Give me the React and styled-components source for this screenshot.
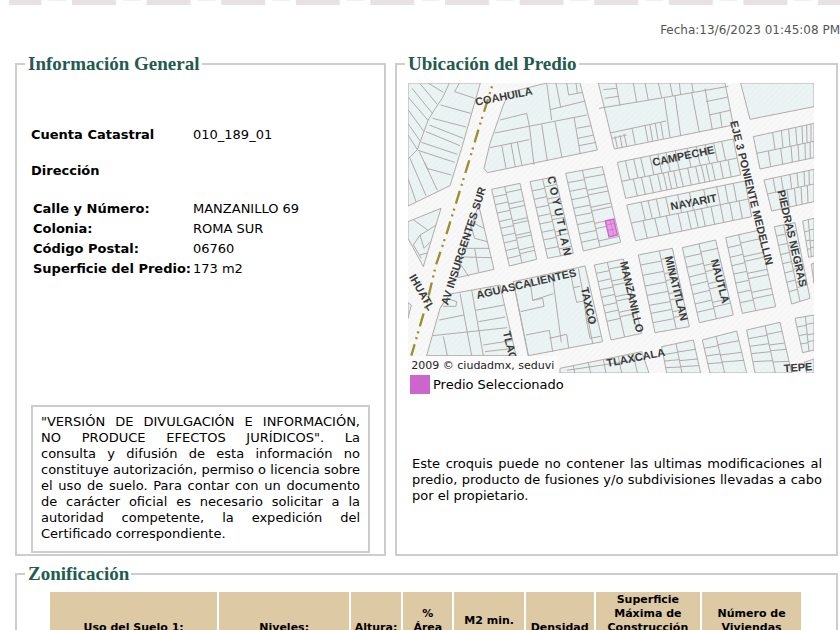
import React from 'react'
import styled, { createGlobalStyle } from 'styled-components'

const GlobalStyle = createGlobalStyle`
    * {
        box-sizing: border-box;
    }
    body {
        margin: 0;
        background-color: white;
        color: black;
        font-family: "DejaVu Sans", Verdana, sans-serif;
        font-size: 13px;
        line-height: 16px;
    }
`

const Page = styled.main`
    display: flex;
    flex-direction: column;
`

const Strip = styled.svg`
    display: block;
    width: 100%;
    height: 6px;
`

const DateLine = styled.div`
    padding: 16px 0;
    text-align: right;
    font-size: 12px;
    color: #555;
`

const Sections = styled.div`
    display: grid;
    grid-template-columns: 371fr 443fr;
    gap: 8px 9px;
    padding: 0 2px 0 15px;
`

const Panel = styled.fieldset`
    display: flex;
    flex-direction: column;
    grid-column: ${props => props.$wide ? '1 / -1' : 'auto'};
    min-width: 0;
    margin: 0;
    padding: 0;
    border: 2px solid #cdcdcd;
`

const Legend = styled.legend`
    margin-left: 8px;
    padding: 0 2px 0 3px;
    font-family: "Liberation Serif", "Times New Roman", serif;
    font-size: 19px;
    font-weight: bold;
    line-height: 20px;
    color: #235b4e;
`

const Info = styled.div`
    display: flex;
    flex-direction: column;
    flex: 1;
    padding: 53px 14px 1px;
`

const Account = styled.dl`
    display: grid;
    grid-template-columns: 162px 1fr;
    margin: 0;
`

const Term = styled.dt`
    font-weight: bold;
    white-space: nowrap;
`

const Value = styled.dd`
    margin: 0;
`

const Heading = styled.h3`
    margin: 20px 0 22px;
    font-size: 13px;
`

const Address = styled.dl`
    display: grid;
    grid-template-columns: 156px 1fr;
    column-gap: 4px;
    row-gap: 4px;
    margin: 0;
    padding-left: 2px;
`

const Notice = styled.p`
    margin: auto 0 0;
    padding: 7px 8px 9px;
    border: 2px solid #cdcdcd;
`

const NoticeLine = styled.span`
    display: block;
    text-align: justify;
    text-align-last: justify;

    &:last-child {
        text-align-last: left;
    }
`

const Location = styled.div`
    display: flex;
    flex-direction: column;
    flex: 1;
    padding: 9px 14px 50px 11px;
`

const Map = styled.svg`
    display: block;
    width: 406px;
    max-width: 100%;
    font-family: "Liberation Sans", Arial, sans-serif;
`

const Key = styled.div`
    display: flex;
    align-items: center;
    gap: 3px;
    padding: 2px;
`

const Swatch = styled.span`
    width: 20px;
    height: 19px;
    background-color: #cc66cc;
`

const Sketch = styled.p`
    margin: 60px 0 0;
    padding-left: 4px;
    text-align: justify;
`

const Zoning = styled.div`
    padding: 6px 33px 0 31px;
`

const Table = styled.table`
    width: 100%;
    table-layout: fixed;
    border-collapse: separate;
    border-spacing: 2px;
`

const Col = styled.col`
    width: ${props => props.$share}%;
`

const HeaderCell = styled.th`
    height: 72px;
    padding: 1px 0;
    background-color: #ddc9a3;
    font-size: 11px;
    line-height: 14px;
    text-align: center;
    vertical-align: middle;
`

const TitleLine = styled.span`
    display: block;
`

const address = [
    { label: 'Calle y Número:', value: 'MANZANILLO 69' },
    { label: 'Colonia:', value: 'ROMA SUR' },
    { label: 'Código Postal:', value: '06760' },
    { label: 'Superficie del Predio:', value: '173 m2' },
]

const notice = [
    '"VERSIÓN DE DIVULGACIÓN E INFORMACIÓN,',
    'NO PRODUCE EFECTOS JURÍDICOS". La',
    'consulta y difusión de esta información no',
    'constituye autorización, permiso o licencia sobre',
    'el uso de suelo. Para contar con un documento',
    'de carácter oficial es necesario solicitar a la',
    'autoridad competente, la expedición del',
    'Certificado correspondiente.',
]

const columns = [
    { share: 22.7, title: ['Uso del Suelo 1:'] },
    { share: 17.6, title: ['Niveles:'] },
    { share: 6.8, title: ['Altura:'] },
    { share: 6.7, title: ['%', 'Área', 'Libre'] },
    { share: 9.4, title: ['M2 min.', 'Vivienda:'] },
    { share: 9.2, title: ['Densidad'] },
    { share: 14.2, title: ['Superficie', 'Máxima de', 'Construcción', '(Sin', 'restricciones):'] },
    { share: 13.4, title: ['Número de', 'Viviendas', 'Permitidas:'] },
]

// city blocks: corners clockwise from top left, c = inner column lines, r = inner row lines (0..1),
// ca / cb = column lines that only cross the upper / lower half
const blocks = [
    { q: [[1060, 185], [1242, 145], [1242, 248], [1080, 282]], r: [0.52], ca: [0.32, 0.46, 0.58, 0.7, 0.8, 0.88, 0.95], cb: [0.2, 0.42, 0.6, 0.72, 0.84, 0.93] },
    { q: [[1092, 315], [1242, 283], [1242, 380], [1115, 408]], r: [0.45], ca: [0.18, 0.34, 0.52, 0.66, 0.8, 0.9], cb: [0.24, 0.42, 0.58, 0.72, 0.86] },
    { q: [[1123, 455], [1185, 443], [1230, 670], [1175, 687]], c: [0.45], r: [0.12, 0.24, 0.36, 0.48, 0.6, 0.72, 0.84] },
    { q: [[1208, 438], [1242, 430], [1242, 543], [1226, 547]], c: [0.5], r: [0.3, 0.55, 0.78] },
    { q: [[652, 262], [1000, 192], [1022, 300], [677, 370]], r: [0.53], ca: [0.07, 0.14, 0.2, 0.28, 0.35, 0.42, 0.5, 0.6, 0.68, 0.76, 0.83, 0.9], cb: [0.1, 0.17, 0.24, 0.31, 0.36, 0.4, 0.45, 0.5, 0.57, 0.64, 0.69, 0.73, 0.78, 0.85, 0.92] },
    { q: [[680, 390], [1035, 318], [1055, 425], [707, 497]], r: [0.5], ca: [0.12, 0.18, 0.25, 0.33, 0.43, 0.53, 0.65, 0.76, 0.83, 0.9], cb: [0.1, 0.2, 0.3, 0.4, 0.48, 0.54, 0.6, 0.68, 0.76, 0.84, 0.92] },
    { q: [[715, 540], [817, 520], [868, 755], [765, 773]], c: [0.62], r: [0.13, 0.26, 0.4, 0.52, 0.65, 0.75, 0.87] },
    { q: [[847, 518], [947, 495], [1000, 720], [898, 743]], c: [0.5], r: [0.13, 0.26, 0.39, 0.5, 0.62, 0.75, 0.86] },
    { q: [[977, 488], [1075, 466], [1127, 695], [1027, 715]], c: [0.4], r: [0.13, 0.26, 0.37, 0.48, 0.6, 0.73, 0.86] },
    { q: [[275, 343], [360, 325], [410, 553], [328, 573]], c: [0.46], r: [0.1, 0.2, 0.31, 0.42, 0.51, 0.61, 0.7, 0.8, 0.9] },
    { q: [[390, 320], [465, 305], [520, 535], [443, 550]], c: [0.5], r: [0.12, 0.23, 0.34, 0.45, 0.55, 0.66, 0.76, 0.88] },
    { q: [[497, 295], [607, 275], [662, 502], [550, 528]], c: [0.45], r: [0.12, 0.23, 0.34, 0.45, 0.55, 0.66, 0.78, 0.89] },
    { q: [[583, 570], [670, 552], [725, 775], [633, 795]], c: [0.45], r: [0.11, 0.22, 0.33, 0.43, 0.54, 0.64, 0.75] },
    { q: [[785, 815], [880, 795], [902, 894], [800, 894]], c: [0.45], r: [0.3, 0.55, 0.8] },
    { q: [[907, 795], [1010, 768], [1040, 894], [930, 894]], c: [0.4], r: [0.25, 0.48, 0.72] },
    { q: [[1040, 765], [1140, 742], [1175, 894], [1065, 894]], c: [0.55], r: [0.2, 0.38, 0.55, 0.74] },
    { q: [[1185, 730], [1242, 720], [1242, 825], [1208, 833]], c: [0.55], r: [0.25, 0.5, 0.75] },
]

// irregular blocks
const outlines = [
    'M24 24H241L222 90L185 220L160 300L150 332L24 393Z',
    'M310 90L328 52L440 24H540L592 225L262 293L252 280L270 205Z',
    'M595 24H975L1000 150L643 222Z',
    'M1022 24L1050 133L1242 95V24Z',
    'M1234 567L1242 565V625Z',
    'M236 390L282 583L172 608L190 520Z',
    'M24 440L123 400L70 575L24 490Z',
    'M150 657L300 630L348 842H80L120 700Z',
    'M340 620L555 573L608 800L385 842Z',
    'M480 880L725 830L747 894H480Z',
    'M1212 862L1242 852V894H1220Z',
    'M24 683L34 690L24 730Z',
]

const lotLines = [
    // west of Insurgentes
    'M148 24L128 68L106 100L84 136L52 224L24 252M84 24L130 52M60 26L112 88M36 40L98 116M26 68L84 136M24 104L72 170M24 146L62 200M24 180L52 224',
    'M178 24L164 50L224 70M122 90L212 115M98 130L198 156M88 150L190 190M78 170L180 212M64 202L172 238M54 226L164 262M80 280L154 300M58 230L112 346M84 284L74 262M30 250L78 362M24 310L48 380',
    // south of Coahuila
    'M300 135L380 115L388 152L402 270M284 174L560 120M440 24L455 135M450 104L556 78M270 218L388 194M305 210L318 280M333 205L346 276M352 202L366 271M425 148L442 258M465 140L486 248M522 126L541 238M530 160L574 152M534 190L582 180M537 212L588 202M468 24L482 96M500 24L506 60L548 52M528 24L532 54',
    'M597 100L790 68L985 34M648 24L660 92M700 24L710 82M735 24L745 76M775 24L785 68M810 24L818 63M838 24L842 59M875 24L880 54M610 44L650 40M614 70L655 64M793 70L810 188M825 62L842 182M875 52L898 172M915 40L937 164M918 80L985 66M928 120L990 106M960 112L966 158M630 174L798 138M645 184L652 218M660 180L666 216M672 176L680 213M696 160L706 208M735 152L744 200M750 150L758 198M766 146L774 194M782 142L790 191M636 190L680 180',
    // around Insurgentes
    'M40 434L84 466L108 450M84 466L60 480L40 510M60 480L72 520L92 500M40 510L64 550M60 540L82 534M212 450L224 490L262 500M196 520L268 520M190 546L276 548M224 520L236 592M212 440L252 460M180 566L206 604',
    'M180 655L215 842M215 644L250 842M118 735L192 720M98 782L322 758M130 784L142 842M226 706L312 690M236 740L316 726M250 810L338 796M240 640L248 664M270 635L278 658M120 700L140 670L170 680L168 694L130 694M255 830L342 820',
    'M340 620L385 842M362 710L432 694L428 670L398 676L390 612M398 676L460 656M456 594L484 802M378 780L448 766L458 830M448 790L500 778L506 818M510 584L520 638L540 634M535 580L578 806M520 638L530 682L552 678M552 678L560 740L590 736M560 740L570 790L602 784',
    'M520 872L524 894M565 863L572 894M610 854L618 894M655 845L665 894M700 836L712 894M500 886L730 852',
]

const streets = [
    { name: 'COAHUILA', x: 228, y: 92, turn: -11 },
    { name: 'AV INSURGENTES SUR', x: 144, y: 692, turn: -72 },
    { name: 'IHUATL', x: 26, y: 606, turn: 60 },
    { name: 'CAMPECHE', x: 760, y: 274, turn: -12 },
    { name: 'NAYARIT', x: 814, y: 406, turn: -11 },
    { name: 'EJE 3 PONIENTE MEDELLIN', x: 990, y: 140, turn: 76 },
    { name: 'PIEDRAS NEGRAS', x: 1132, y: 348, turn: 77 },
    { name: 'C O Y U T L A N', x: 442, y: 306, turn: 78 },
    { name: 'AGUASCALIENTES', x: 232, y: 672, turn: -13 },
    { name: 'TAXCO', x: 542, y: 640, turn: 77 },
    { name: 'MANZANILLO', x: 660, y: 562, turn: 77 },
    { name: 'MINATITLAN', x: 794, y: 546, turn: 76 },
    { name: 'NAUTLA', x: 932, y: 556, turn: 75 },
    { name: 'TLAC', x: 308, y: 772, turn: 76 },
    { name: 'TLAXCALA', x: 622, y: 876, turn: -11 },
    { name: 'TEPE', x: 1152, y: 892, turn: -4 },
]

function at(q, u, v) {
    const mix = i =>
        (q[0][i] * (1 - u) + q[1][i] * u) * (1 - v) + (q[3][i] * (1 - u) + q[2][i] * u) * v
    return `${Math.round(mix(0))} ${Math.round(mix(1))}`
}

function lots({ q, c = [], r = [], ca = [], cb = [] }) {
    const line = (u1, v1, u2, v2) => `M${at(q, u1, v1)}L${at(q, u2, v2)}`
    return [
        ...c.map(u => line(u, 0, u, 1)),
        // neighbouring lots do not line up exactly across the back fence
        ...r.map((v, i) => c.length
            ? line(0, v, c[0], v) + line(c[0], v + (i % 2 ? 0.03 : -0.02), 1, v + (i % 2 ? 0.03 : -0.02))
            : line(0, v, 1, v)),
        ...ca.map(u => line(u, 0, u, r[0])),
        ...cb.map(u => line(u, r[0], u, 1)),
    ].join('')
}

function LotMap() {
    return (
        <Map viewBox="24 24 1218 870" role="img" aria-label="Croquis de ubicación del predio">
            <defs>
                <pattern id="ground" width="18" height="18" patternUnits="userSpaceOnUse">
                    <rect width="18" height="18" fill="#f8f8f8" />
                    <path d="M0 18L18 0" stroke="#f2f2f2" strokeWidth="3" />
                </pattern>
                <pattern id="lot" width="18" height="18" patternUnits="userSpaceOnUse">
                    <rect width="18" height="18" fill="#e6f3f2" />
                    <path d="M0 18L18 0" stroke="#eff3f2" strokeWidth="5" />
                </pattern>
            </defs>
            <rect x="24" y="24" width="1218" height="870" fill="url(#ground)" />
            <g fill="url(#lot)" stroke="#b3aaaa" strokeWidth="3">
                {outlines.map(d => <path key={d} d={d} />)}
                {blocks.map(block => (
                    <path key={block.q.join()} d={`M${block.q.map(p => p.join(' ')).join('L')}Z`} />
                ))}
            </g>
            <g fill="none" stroke="#b3aaaa" strokeWidth="3">
                {lotLines.map(d => <path key={d} d={d} />)}
                {blocks.map(block => <path key={block.q.join()} d={lots(block)} />)}
            </g>
            <path d="M616 438L641 432L652 480L627 486Z" fill="#e79be7" stroke="#cc66cc" strokeWidth="4" />
            <path d="M631 436L641 482M619 450L643 445M623 466L648 461" stroke="#cc66cc" strokeWidth="2" />
            <path
                d="M276 34L238 155L205 265L140 475L108 570L84 670L34 842"
                fill="none"
                stroke="#9c8f2c"
                strokeWidth="7"
                strokeDasharray="6 12 6 16 40 16"
            />
            <g fontSize="33" fontWeight="bold" fill="#3a3a3a">
                {streets.map(({ name, x, y, turn }) => (
                    <text key={name} x={x} y={y} transform={`rotate(${turn} ${x} ${y})`}>{name}</text>
                ))}
            </g>
            <rect x="24" y="843" width="450" height="51" fill="#fbfbfb" />
            <text x="34" y="882" fontFamily="DejaVu Sans" fontSize="33" fill="#222">
                2009 © ciudadmx, seduvi
            </text>
        </Map>
    )
}

function HeaderStrip() {
    return (
        <Strip aria-hidden="true">
            <defs>
                <pattern id="fret" x="72" width="74.6" height="6" patternUnits="userSpaceOnUse">
                    <rect width="44" height="5" fill="#e9e2e5" />
                    <rect x="51" width="18" height="1" fill="#f3eff1" />
                </pattern>
            </defs>
            <rect x="9" width="100%" height="6" fill="url(#fret)" />
        </Strip>
    )
}

function ZoningTable() {
    return (
        <Table>
            <colgroup>
                {columns.map(({ share, title }) => <Col key={title[0]} $share={share} />)}
            </colgroup>
            <thead>
                <tr>
                    {columns.map(({ title }) => (
                        <HeaderCell key={title[0]} scope="col">
                            {title.map(line => <TitleLine key={line}>{line}</TitleLine>)}
                        </HeaderCell>
                    ))}
                </tr>
            </thead>
        </Table>
    )
}

export default function App() {
    return (
        <Page>
            <GlobalStyle />
            <HeaderStrip />
            <DateLine>Fecha:13/6/2023 01:45:08 PM</DateLine>

            <Sections>
                <Panel>
                    <Legend>Información General</Legend>
                    <Info>
                        <Account>
                            <Term>Cuenta Catastral</Term>
                            <Value>010_189_01</Value>
                        </Account>
                        <Heading>Dirección</Heading>
                        <Address>
                            {address.map(row => (
                                <React.Fragment key={row.label}>
                                    <Term>{row.label}</Term>
                                    <Value>{row.value}</Value>
                                </React.Fragment>
                            ))}
                        </Address>
                        <Notice>
                            {notice.map(line => <NoticeLine key={line}>{line} </NoticeLine>)}
                        </Notice>
                    </Info>
                </Panel>

                <Panel>
                    <Legend>Ubicación del Predio</Legend>
                    <Location>
                        <LotMap />
                        <Key>
                            <Swatch />
                            Predio Seleccionado
                        </Key>
                        <Sketch>
                            Este croquis puede no contener las ultimas modificaciones al predio, producto
                            de fusiones y/o subdivisiones llevadas a cabo por el propietario.
                        </Sketch>
                    </Location>
                </Panel>

                <Panel $wide>
                    <Legend>Zonificación</Legend>
                    <Zoning>
                        <ZoningTable />
                    </Zoning>
                </Panel>
            </Sections>
        </Page>
    )
}
